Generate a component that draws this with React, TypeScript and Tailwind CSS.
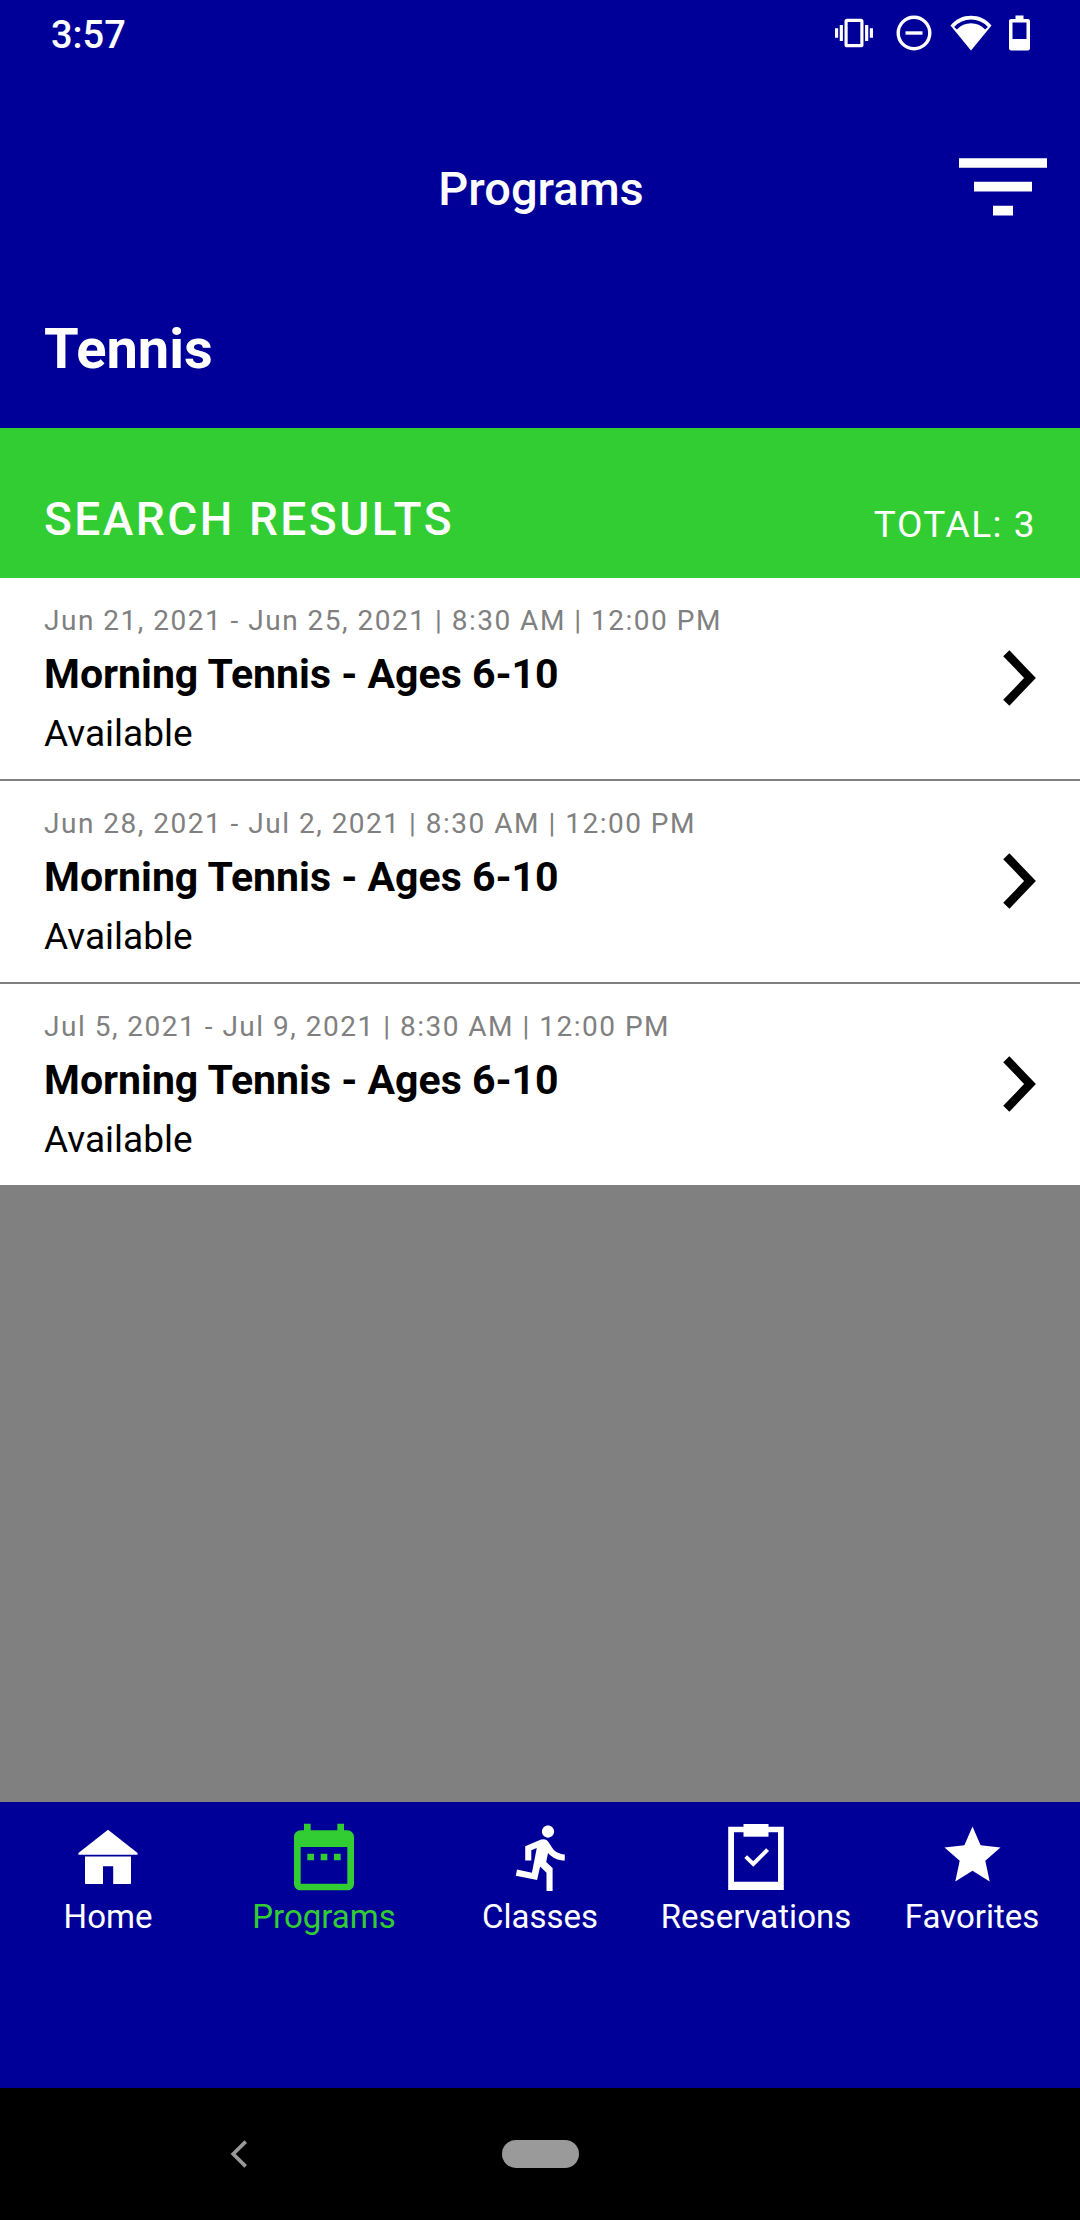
import type { ReactNode } from 'react';

const programs = [
    { id: 1, when: 'Jun 21, 2021 - Jun 25, 2021 | 8:30 AM | 12:00 PM', title: 'Morning Tennis - Ages 6-10', status: 'Available' },
    { id: 2, when: 'Jun 28, 2021 - Jul 2, 2021 | 8:30 AM | 12:00 PM', title: 'Morning Tennis - Ages 6-10', status: 'Available' },
    { id: 3, when: 'Jul 5, 2021 - Jul 9, 2021 | 8:30 AM | 12:00 PM', title: 'Morning Tennis - Ages 6-10', status: 'Available' },
];

function StatusBar() {
    return (
        <div className="flex h-[66px] items-center justify-between px-[50px]">
            <span className="pt-[4px] pl-px text-[38px] leading-[66px] font-medium">3:57</span>
            <div className="flex h-[66px] items-center">
                <svg className="mr-[23px] h-[38px] w-[38px]" viewBox="0 0 24 24" fill="currentColor">
                    <path d="M0 15h2V9H0v6zm3 2h2V7H3v10zm19-8v6h2V9h-2zm-3 8h2V7h-2v10zM16.5 3h-9C6.67 3 6 3.67 6 4.5v15c0 .83.67 1.5 1.5 1.5h9c.83 0 1.5-.67 1.5-1.5v-15c0-.83-.67-1.5-1.5-1.5zM16 19H8V5h8v14z" />
                </svg>
                <svg className="mr-[18px] h-[36px] w-[36px]" viewBox="0 0 36 36" fill="none" stroke="currentColor" strokeWidth={3.4}>
                    <circle cx="18" cy="18" r="15.8" />
                    <path d="M9.5 18h17" />
                </svg>
                <svg className="mr-[17px] h-[36px] w-[42px]" viewBox="0 0 42 36">
                    <path fill="currentColor" d="M21 35.5 0.5 10.5C6 4 13 .8 21 .8S36 4 41.5 10.5z" />
                    <path fill="none" stroke="#000099" strokeWidth={3.8} d="M5.5 13.2C10 8.3 15 6.3 21 6.3s11 2 15.5 6.9" />
                </svg>
                <svg className="h-[36px] w-[21px]" viewBox="0 0 21 36" fill="currentColor">
                    <path fillRule="evenodd" d="M6.5.5h8V4h4.3c1.300 0 2.200.9 2.200 2.200v27.100c0 1.300-.9 2.200-2.200 2.200H2.200C.9 35.500 0 34.600 0 33.300V6.200C0 4.900.9 4 2.200 4h4.300zM3.500 7.500V24h14V7.500z" />
                </svg>
            </div>
        </div>
    );
}

function Header() {
    return (
        <header className="h-[428px] bg-[#000099]">
            <StatusBar />
            <div className="mt-[61px] grid h-[120px] grid-cols-3 items-center">
                <h1 className="col-start-2 pt-[4px] pl-[2px] text-center text-[47px] leading-[60px] font-medium">Programs</h1>
                <button className="mr-[33px] justify-self-end">
                    <svg className="h-[58px] w-[88px]" viewBox="0 0 88 58" fill="currentColor">
                        <path d="M0 .2h88v9.600H0zM15 23.800h58v9.800H15zM34 47.800h20v9.800H34z" />
                    </svg>
                </button>
            </div>
            <h2 className="mt-[72px] pl-[44px] text-[56px] leading-[60px] font-bold">Tennis</h2>
        </header>
    );
}

function ResultsBar() {
    return (
        <div className="flex h-[150px] items-end justify-between bg-[#32cd32] pr-[44px] pb-[26px] pl-[44px]">
            <span className="mb-[3px] text-[46px] leading-[60px] font-medium tracking-[2.5px]">SEARCH RESULTS</span>
            <span className="text-[37px] leading-[54px] tracking-[1.5px]">TOTAL: 3</span>
        </div>
    );
}

function TabItem({ label, active, children }: { label: string; active?: boolean; children: ReactNode }) {
    return (
        <button className={`flex w-[216px] flex-col items-center ${active ? 'text-[#32cd32]' : 'text-white'}`}>
            <span className="mt-[15px] flex h-[80px] items-center justify-center">{children}</span>
            <span className="text-[33px] leading-[40px] whitespace-nowrap">{label}</span>
        </button>
    );
}

function TabBar() {
    return (
        <nav className="flex h-[286px] shrink-0 items-start bg-[#000099]">
            <TabItem label="Home">
                <svg className="h-[80px] w-[80px]" viewBox="0 0 80 80" fill="currentColor">
                    <path d="M40 12.700 69.600 36v1.700H10.400V36zM17 39.500h46v26.300c0 .8-.4 1.200-1.200 1.200H45.200V49.200H35V67H18.200c-.8 0-1.200-.4-1.200-1.200z" />
                </svg>
            </TabItem>
            <TabItem label="Programs" active>
                <svg className="h-[80px] w-[80px]" viewBox="0 0 24 24" fill="currentColor">
                    <path d="M9 11H7v2h2v-2zm4 0h-2v2h2v-2zm4 0h-2v2h2v-2zm2-7h-1V2h-2v2H8V2H6v2H5c-1.110 0-1.990.9-1.990 2L3 20c0 1.100.89 2 2 2h14c1.100 0 2-.9 2-2V6c0-1.100-.9-2-2-2zm0 16H5V9h14v11z" />
                </svg>
            </TabItem>
            <TabItem label="Classes">
                <svg className="ml-[6px] h-[73px] w-[73px]" viewBox="0 0 24 24" fill="currentColor">
                    <path d="M13.490 5.480c1.100 0 2-.9 2-2s-.9-2-2-2-2 .9-2 2 .9 2 2 2zm-3.600 13.900l1-4.400 2.100 2v6h2v-7.500l-2.100-2 .6-3c1.300 1.500 3.300 2.500 5.500 2.500v-2c-1.900 0-3.500-1-4.300-2.400l-1-1.600c-.4-.6-1-1-1.700-1-.3 0-.5.1-.8.1l-5.200 2.200v4.700h2v-3.400l1.800-.7-1.600 8.100-4.900-1-.4 2 7 1.400z" />
                </svg>
            </TabItem>
            <TabItem label="Reservations">
                <svg className="h-[80px] w-[80px]" viewBox="0 0 80 80" fill="currentColor">
                    <path fillRule="evenodd" d="M12.200 9.800h55.600V73H12.200zM18 15.200v49.500h44V15.200z" />
                    <path d="M27.500 7h25v12.700h-25z" />
                    <path fill="none" stroke="currentColor" strokeWidth={4} d="m29.700 39.600 7.600 7.400 14.300-14.400" />
                </svg>
            </TabItem>
            <TabItem label="Favorites">
                <svg className="h-[80px] w-[80px]" viewBox="0 0 80 80" fill="currentColor">
                    <path d="m40.500 9.500 8.100 18.700 19.900 2.300-15.200 13.300 4.400 20.600-17.200-10.600-17.200 10.600 4.400-20.600L12.500 30.500l19.900-2.300z" />
                </svg>
            </TabItem>
        </nav>
    );
}

export default function App() {
    return (
        <div className="flex h-[2220px] w-[1080px] flex-col overflow-hidden bg-[#808080] font-[Roboto,sans-serif] text-white">
            <Header />
            <ResultsBar />
            <main className="flex-1">
                <ul className="divide-y-2 divide-[#808080] bg-white text-black">
                    {programs.map((p) => (
                        <li key={p.id} className="flex items-center justify-between pr-[44px] pl-[44px]">
                            <div className="pt-[23px] pb-[18px]">
                                <p className="text-[28px] leading-[40px] tracking-[1.5px] text-[#808080]">{p.when}</p>
                                <p className="text-[41px] leading-[66px] font-bold">{p.title}</p>
                                <p className="text-[37px] leading-[54px]">{p.status}</p>
                            </div>
                            <svg className="mb-[2px] h-[56px] w-[33px]" viewBox="0 0 33 56" fill="none" stroke="black" strokeWidth={8.5}>
                                <path d="m3.300 3.200 23.700 24.800-23.700 24.800" />
                            </svg>
                        </li>
                    ))}
                </ul>
            </main>
            <TabBar />
            <div className="flex h-[132px] shrink-0 items-center bg-black">
                <svg className="ml-[230px] h-[28px] w-[18px]" viewBox="0 0 18 28" fill="none" stroke="#9a9a9a" strokeWidth={3.6}>
                    <path d="M15.700 1.600 3.200 14l12.500 12.400" />
                </svg>
                <div className="ml-[254px] h-[28px] w-[77px] rounded-full bg-[#9a9a9a]" />
            </div>
        </div>
    );
}
